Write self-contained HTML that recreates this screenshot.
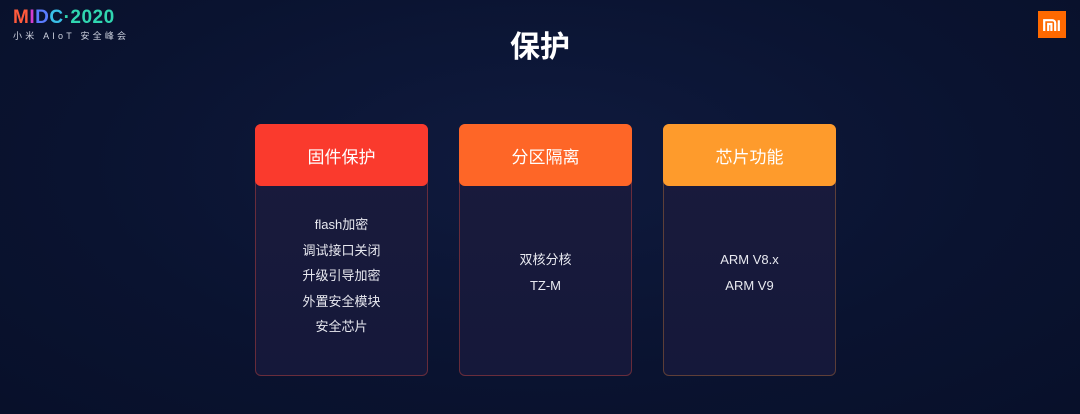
<!DOCTYPE html>
<html><head><meta charset="utf-8"><style>
*{margin:0;padding:0;box-sizing:border-box}
body{width:1080px;height:414px;overflow:hidden;background:radial-gradient(ellipse at 50% 40%,#0f1a3e 0%,#0a1330 60%,#08102a 100%);font-family:"Liberation Sans","Noto Sans CJK SC",sans-serif;position:relative;color:#fff}
.logo{position:absolute;left:13px;top:8px}
.logo .big{font-size:19px;font-weight:bold;letter-spacing:0.5px;line-height:20px}
.logo .small{font-size:9px;letter-spacing:3.2px;color:#cfd3e0;margin-top:1px}
.mi{position:absolute;left:1038px;top:11px;width:28px;height:27px;background:#ff6900;display:flex;align-items:center;justify-content:center}
h1{position:absolute;top:22px;left:0;width:1080px;text-align:center;font-size:30px;font-weight:bold}
.card{position:absolute;top:124px;width:173px;height:252px;border:1px solid rgba(255,80,60,0.35);border-radius:6px;background:linear-gradient(#1a1b3c,#15183a)}
.hd{height:62px;border-radius:6px;display:flex;align-items:center;justify-content:center;font-size:17px;margin:-1px}
.bd{position:absolute;left:0;right:0;text-align:center;font-size:13px;line-height:25.5px;color:#e8e9f0}
</style></head><body>
<div class="logo"><div class="big"><span style="color:#ff5a3c">M</span><span style="color:#d43ccf">I</span><span style="color:#5a7cff">D</span><span style="color:#3ac0e8">C</span><span style="color:#30d6b0">·2020</span></div><div class="small">小米 AIoT 安全峰会</div></div>
<div class="mi"><svg width="18" height="12" viewBox="0 0 18 12"><path d="M1.2 12V1.2h8a3 3 0 0 1 3 3V12M5.2 12V5h3.2v7M15.8 1.2V12" fill="none" stroke="#fff" stroke-width="2.2"/></svg></div>
<h1>保护</h1>
<div class="card" style="left:255px"><div class="hd" style="background:#fa3a2d">固件保护</div><div class="bd" style="top:87px"><div>flash加密</div><div>调试接口关闭</div><div>升级引导加密</div><div>外置安全模块</div><div>安全芯片</div></div></div>
<div class="card" style="left:459px"><div class="hd" style="background:#fe6627">分区隔离</div><div class="bd" style="top:122px"><div>双核分核</div><div>TZ-M</div></div></div>
<div class="card" style="left:663px;border-color:rgba(255,150,50,0.3)"><div class="hd" style="background:#fe9b2c">芯片功能</div><div class="bd" style="top:122px"><div>ARM V8.x</div><div>ARM V9</div></div></div>
</body></html>
